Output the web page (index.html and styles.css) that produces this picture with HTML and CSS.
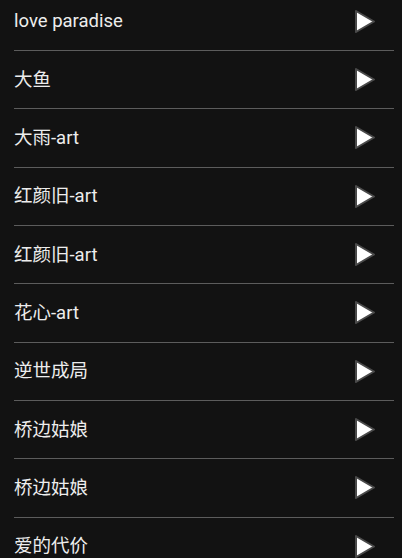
FILE: index.html
```html
<!DOCTYPE html>
<html>
<head>
<meta charset="utf-8">
<link rel="stylesheet" href="styles.css">
</head>
<body>
<ul class="list">
  <li class="row"><span class="title">love paradise</span><svg class="play" viewBox="0 0 24 27"><polygon points="3,3 21,13.5 3,24"/></svg></li>
  <li class="row"><span class="title">大鱼</span><svg class="play" viewBox="0 0 24 27"><polygon points="3,3 21,13.5 3,24"/></svg></li>
  <li class="row"><span class="title">大雨-art</span><svg class="play" viewBox="0 0 24 27"><polygon points="3,3 21,13.5 3,24"/></svg></li>
  <li class="row"><span class="title">红颜旧-art</span><svg class="play" viewBox="0 0 24 27"><polygon points="3,3 21,13.5 3,24"/></svg></li>
  <li class="row"><span class="title">红颜旧-art</span><svg class="play" viewBox="0 0 24 27"><polygon points="3,3 21,13.5 3,24"/></svg></li>
  <li class="row"><span class="title">花心-art</span><svg class="play" viewBox="0 0 24 27"><polygon points="3,3 21,13.5 3,24"/></svg></li>
  <li class="row"><span class="title">逆世成局</span><svg class="play" viewBox="0 0 24 27"><polygon points="3,3 21,13.5 3,24"/></svg></li>
  <li class="row"><span class="title">桥边姑娘</span><svg class="play" viewBox="0 0 24 27"><polygon points="3,3 21,13.5 3,24"/></svg></li>
  <li class="row"><span class="title">桥边姑娘</span><svg class="play" viewBox="0 0 24 27"><polygon points="3,3 21,13.5 3,24"/></svg></li>
  <li class="row"><span class="title">爱的代价</span><svg class="play" viewBox="0 0 24 27"><polygon points="3,3 21,13.5 3,24"/></svg></li>
</ul>
</body>
</html>
```
FILE: styles.css
```css
html, body {
  margin: 0;
  padding: 0;
  background: #121212;
  height: 100%;
  overflow: hidden;
}
.list {
  list-style: none;
  margin: -7.33px 0 0 0;
  padding: 0 8px 0 14px;
}
.row {
  box-sizing: border-box;
  height: 58.333px;
  border-bottom: 1px solid #5c5c5c;
  display: flex;
  align-items: center;
  justify-content: space-between;
  padding-right: 17px;
}
.title {
  font-family: Roboto, "Noto Sans CJK SC", sans-serif;
  font-size: 18.5px;
  line-height: 22px;
  color: #ededed;
}
.play {
  width: 24px;
  height: 27px;
}
.play polygon {
  fill: #ffffff;
  stroke: #4a4a4a;
  stroke-width: 2;
  stroke-linejoin: round;
}
```
